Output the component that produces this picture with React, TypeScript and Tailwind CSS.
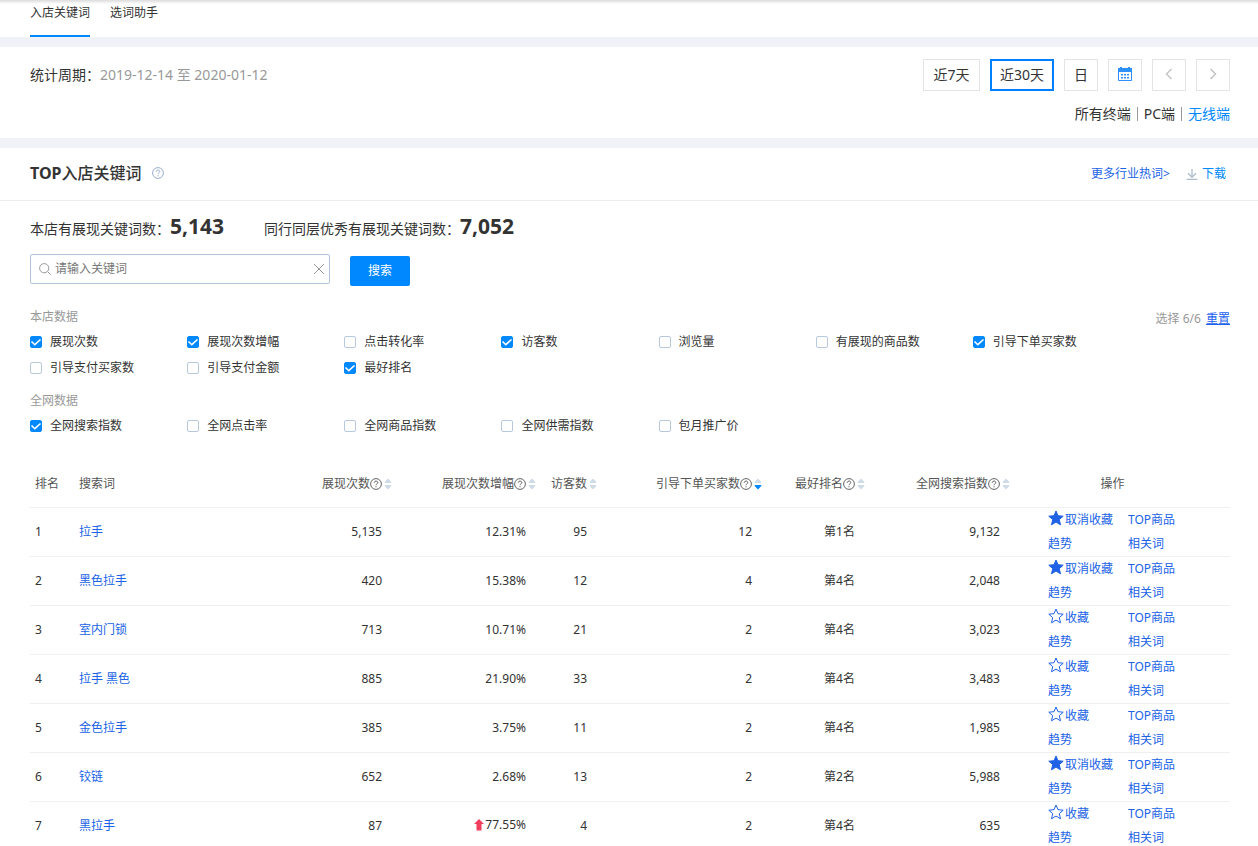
import { useState } from "react"

type Metric = { name: string, on?: boolean }

const shopMetrics: Metric[] = [
  { name: "展现次数", on: true },
  { name: "展现次数增幅", on: true },
  { name: "点击转化率" },
  { name: "访客数", on: true },
  { name: "浏览量" },
  { name: "有展现的商品数" },
  { name: "引导下单买家数", on: true },
  { name: "引导支付买家数" },
  { name: "引导支付金额" },
  { name: "最好排名", on: true },
]

const siteMetrics: Metric[] = [
  { name: "全网搜索指数", on: true },
  { name: "全网点击率" },
  { name: "全网商品指数" },
  { name: "全网供需指数" },
  { name: "包月推广价" },
]

const columns = [
  { name: "展现次数", help: true, sort: "none" },
  { name: "展现次数增幅", help: true, sort: "none" },
  { name: "访客数", help: false, sort: "none" },
  { name: "引导下单买家数", help: true, sort: "desc" },
  { name: "最好排名", help: true, sort: "none" },
  { name: "全网搜索指数", help: true, sort: "none" },
]

const rows = [
  { term: "拉手", views: "5,135", growth: "12.31%", visitors: 95, buyers: 12, best: 1, index: "9,132", starred: true },
  { term: "黑色拉手", views: "420", growth: "15.38%", visitors: 12, buyers: 4, best: 4, index: "2,048", starred: true },
  { term: "室内门锁", views: "713", growth: "10.71%", visitors: 21, buyers: 2, best: 4, index: "3,023" },
  { term: "拉手 黑色", views: "885", growth: "21.90%", visitors: 33, buyers: 2, best: 4, index: "3,483" },
  { term: "金色拉手", views: "385", growth: "3.75%", visitors: 11, buyers: 2, best: 4, index: "1,985" },
  { term: "铰链", views: "652", growth: "2.68%", visitors: 13, buyers: 2, best: 2, index: "5,988", starred: true },
  { term: "黑拉手", views: "87", growth: "77.55%", up: true, visitors: 4, buyers: 2, best: 4, index: "635" },
]

export default function App() {
  return (
    <div className="bg-white font-['Noto_Sans','Noto_Sans_CJK_SC',sans-serif] text-xs text-[#333]">
      {/* Tabs */}
      <nav className="flex gap-5 h-[37px] pl-[30px] bg-linear-to-b from-[#dcdcdc] to-white to-[4px]">
        <a href="#keywords" className="pt-px border-b-2 border-[#0088ff] leading-6">入店关键词</a>
        <a href="#helper" className="pt-px leading-6">选词助手</a>
      </nav>

      {/* Period */}
      <section className="border-y-[10px] border-[#f0f2f8] pt-3 pb-3 pl-[30px] pr-7 text-sm">
        <div className="flex items-center justify-between">
          <p>统计周期：<span className="text-[#999]">2019-12-14 至 2020-01-12</span></p>
          <div className="flex gap-2.5">
            <button className="h-8 w-[57px] border border-[#e4e4e4]">近7天</button>
            <button className="h-8 w-16 border-2 border-[#0080ff]">近30天</button>
            <button className="h-8 w-[34px] border border-[#e4e4e4]">日</button>
            <button aria-label="选择日期" className="flex items-center justify-center pb-0.5 h-8 w-[34px] border border-[#e4e4e4]"><CalendarIcon /></button>
            <button aria-label="上一页" className="flex items-center justify-center pb-0.5 h-8 w-[34px] border border-[#e4e4e4]"><Chevron d="M8.500 2 3.500 7l5 5" /></button>
            <button aria-label="下一页" className="flex items-center justify-center pb-0.5 h-8 w-[34px] border border-[#e4e4e4]"><Chevron d="m3.500 2 5 5-5 5" /></button>
          </div>
        </div>
        <div className="mt-3 mb-0.5 flex items-center justify-end gap-1.5 leading-[21px]">
          <a href="#all">所有终端</a>
          <span className="h-3.5 w-px bg-[#999]" />
          <a href="#pc">PC端</a>
          <span className="h-3.5 w-px bg-[#999]" />
          <a href="#wireless" className="text-[#0088ff]">无线端</a>
        </div>
      </section>

      {/* Title */}
      <header className="flex items-center justify-between h-[53px] pb-0.5 pl-[30px] pr-8 border-b border-[#ececec]">
        <div className="flex items-center gap-2.5">
          <h1 className="text-base font-bold">TOP<span className="font-medium">入店关键词</span></h1>
          <HelpIcon className="size-3 text-[#8ea4c8]" />
        </div>
        <div className="flex items-center gap-4 pt-0.5">
          <a href="#hot" className="text-[#2062e6]">更多行业热词&gt;</a>
          <a href="#download" className="flex items-center gap-1 text-[#0088ff]"><DownloadIcon />下载</a>
        </div>
      </header>

      <main className="pl-[30px] pr-7">
        <div className="flex gap-10 pt-2.5 text-sm">
          <p className="leading-[30px]">本店有展现关键词数：<b className="text-[21px]">5,143</b></p>
          <p className="leading-[30px]">同行同层优秀有展现关键词数：<b className="text-[21px]">7,052</b></p>
        </div>

        {/* Search */}
        <form className="mt-2.5 flex items-start gap-5" onSubmit={(e) => e.preventDefault()}>
          <div className="flex items-center w-[300px] h-[30px] px-1 border border-[#b4c6dc] rounded-xs">
            <svg className="mx-1 size-3 flex-none" viewBox="0 0 12 12" fill="none" stroke="#999">
              <circle cx="5.2" cy="5.2" r="4.6" />
              <path d="m8.6 8.6 3 3" />
            </svg>
            <input type="text" aria-label="关键词" placeholder="请输入关键词" className="grow min-w-0 outline-none placeholder:text-[#777]" />
            <button type="reset" aria-label="清空" className="flex-none">
              <svg className="size-3" viewBox="0 0 12 12" fill="none" stroke="#999"><path d="m1 1 10 10M11 1 1 11" /></svg>
            </button>
          </div>
          <button type="submit" className="mt-0.5 w-[60px] h-[30px] rounded-xs bg-[#0088ff] text-white">搜索</button>
        </form>

        {/* Metrics */}
        <div className="mt-[21px] flex">
          <div className="grow">
            <MetricGroup title="本店数据" metrics={shopMetrics} />
            <MetricGroup title="全网数据" metrics={siteMetrics} />
          </div>
          <p className="flex-none w-[100px] pt-1 text-right text-[#999]">选择 6/6 <a href="#reset" className="ml-0.5 text-[#1d62f0] underline">重置</a></p>
        </div>

        <table className="mt-3 w-full table-fixed">
          <colgroup>
            <col className="w-11" />
            <col />
            <col className="w-[120px]" />
            <col className="w-36" />
            <col className="w-[61px]" />
            <col className="w-[165px]" />
            <col className="w-[103px]" />
            <col className="w-[145px]" />
            <col className="w-[215px]" />
          </colgroup>
          <thead>
            <tr className="h-[46px] border-b border-[#f0f0f0] text-[#555]">
              <th className="pl-[5px] text-left font-normal">排名</th>
              <th className="pl-[5px] text-left font-normal">搜索词</th>
              {columns.map((c) => (
                <th key={c.name} className="pr-[5px] font-normal whitespace-nowrap">
                  <div className="flex items-center justify-end">
                    {c.name}
                    {c.help && <HelpIcon className="size-3" />}
                    <Sorter desc={c.sort === "desc"} />
                  </div>
                </th>
              ))}
              <th className="pr-5 font-normal">操作</th>
            </tr>
          </thead>
          <tbody>
            {rows.map((r, i) => (
              <tr key={r.term} className="border-b border-[#f0f0f0] last:border-0 text-right">
                <td className="pl-[5px] text-left">{i + 1}</td>
                <td className="pl-[5px] text-left"><a href="#term" className="text-[#2062e6]">{r.term}</a></td>
                <td className="pr-[15px]">{r.views}</td>
                <td className="pr-[15px]">
                  <span className="inline-flex items-center">{r.up && <UpArrow />}{r.growth}</span>
                </td>
                <td className="pr-[15px]">{r.visitors}</td>
                <td className="pr-[15px]">{r.buyers}</td>
                <td className="pr-[15px]">第{r.best}名</td>
                <td className="pr-[15px]">{r.index}</td>
                <td className="pl-[33px] text-left">
                  <div className="grid grid-cols-[80px_1fr] leading-6 text-[#2062e6]">
                    <a href="#star" className="flex"><Star filled={r.starred} />{r.starred ? "取消收藏" : "收藏"}</a>
                    <a href="#top">TOP商品</a>
                    <a href="#trend">趋势</a>
                    <a href="#related">相关词</a>
                  </div>
                </td>
              </tr>
            ))}
          </tbody>
        </table>
      </main>
    </div>
  )
}

function MetricGroup(props: { title: string, metrics: Metric[] }) {
  return (
    <fieldset className="mb-2.5">
      <legend className="mb-0.5 leading-5 text-[#999]">{props.title}</legend>
      <div className="grid grid-cols-7">
        {props.metrics.map((m) => <MetricBox key={m.name} name={m.name} on={m.on} />)}
      </div>
    </fieldset>
  )
}

function MetricBox(props: { name: string, on?: boolean }) {
  const [checked, setChecked] = useState(!!props.on)
  return (
    <label className="flex items-center h-[26px]">
      <span className="relative flex mr-2">
        <input
          type="checkbox"
          checked={checked}
          onChange={(e) => setChecked(e.target.checked)}
          className="appearance-none size-3 border border-[#b9c9dd] rounded-xs checked:border-[#0088ff] checked:bg-[#0088ff]"
        />
        {checked && (
          <svg className="absolute inset-0 size-3 pointer-events-none" viewBox="0 0 12 12" fill="none" stroke="#fff" strokeWidth="1.6">
            <path d="m1.500 5.500 3.300 3.200L10.500 3.500" />
          </svg>
        )}
      </span>
      {props.name}
    </label>
  )
}

function HelpIcon(props: { className: string }) {
  return (
    <svg className={props.className} viewBox="0 0 12 12" fill="none" stroke="currentColor" strokeWidth="0.9">
      <circle cx="6" cy="6" r="5.4" />
      <path d="M4.200 4.800c0-2.400 3.600-2.200 3.600-.2 0 1.200-1.800 1.200-1.800 2.600M6 8.200v1.100" />
    </svg>
  )
}

function Sorter(props: { desc: boolean }) {
  return (
    <svg className="w-2.5 h-3" viewBox="0 0 10 12">
      <path d="m6 .5 3.300 3.500v1H2.700V4z" fill="#cfdbe6" />
      <path d="M6 11.500 9.300 8V7H2.700v1z" fill={props.desc ? "#0088ff" : "#cfdbe6"} />
    </svg>
  )
}

function Star(props: { filled?: boolean }) {
  return (
    <svg className="mt-0.5 mr-px size-4" viewBox="0 0 16 16" stroke="currentColor" fill={props.filled ? "currentColor" : "none"}>
      <path d="m8 1 2 4.700 5.200.5-3.900 3.400 1.200 5.200L8 12.100l-4.500 2.700 1.200-5.200L.8 6.200 6 5.700z" />
    </svg>
  )
}

function UpArrow() {
  return (
    <svg className="mr-px w-2.5 h-3" viewBox="0 0 10 12" fill="#f03e5e">
      <path d="m5 0 5 5H7.500v6.500h-5V5H0z" />
    </svg>
  )
}

function Chevron(props: { d: string }) {
  return (
    <svg className="w-3 h-3.5" viewBox="0 0 12 14" fill="none" stroke="#c4c4c4" strokeWidth="1.5"><path d={props.d} /></svg>
  )
}

function CalendarIcon() {
  return (
    <svg className="w-3.5 h-3.5" viewBox="0 0 14 14" fill="#2e90fa">
      <path d="M0 1h2V0h2v1h6V0h2v1h2v4H0z" />
      <path d="M.5 4.500h13v9H.5z" fill="none" stroke="#2e90fa" />
      <path d="M3 7h2v1.500H3zM6 7h2v1.500H6zM9 7h2v1.500H9zM3 10h2v1.500H3zM6 10h2v1.500H6zM9 10h2v1.500H9z" />
    </svg>
  )
}

function DownloadIcon() {
  return (
    <svg className="size-3" viewBox="0 0 12 12" fill="none" stroke="#b0bfd0" strokeWidth="1.300">
      <path d="M6 1v8M2 5.300l4 4 4-4M.5 11.400h11" />
    </svg>
  )
}
